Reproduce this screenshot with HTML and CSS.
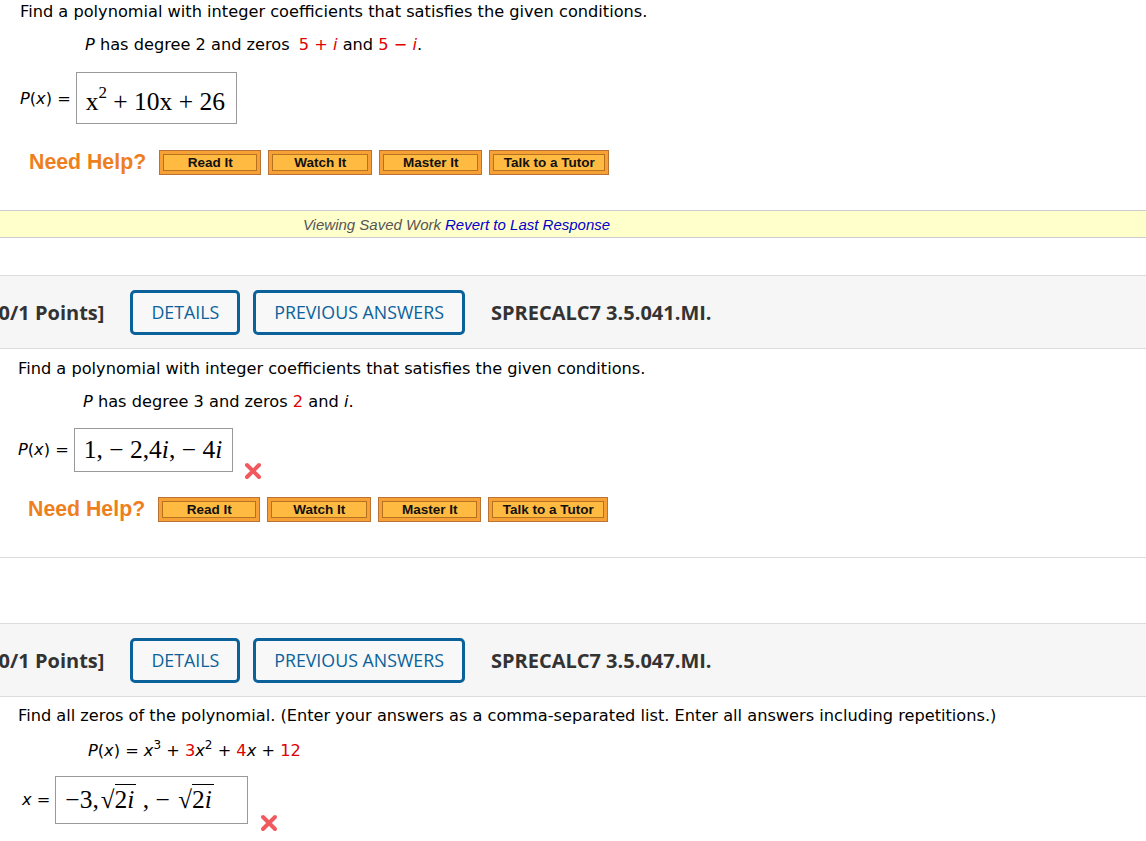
FILE: index.html
```html
<!DOCTYPE html>
<html>
<head>
<meta charset="utf-8">
<link rel="stylesheet" href="styles.css">
</head>
<body>
<div class="q q1">
  <p class="stem">Find a polynomial with integer coefficients that satisfies the given conditions.</p>
  <p class="cond"><i>P</i> has degree 2 and zeros <span class="red sp">5 + <i>i</i></span> and <span class="red">5 &minus; <i>i</i></span>.</p>
  <div class="ans">
    <span class="lbl"><i>P</i>(<i>x</i>) =</span>
    <div class="box box1"><span class="m">x<sup>2</sup> + 10x + 26</span></div>
  </div>
  <div class="help">
    <span class="nh">Need Help?</span>
    <span class="ob w1"><span>Read It</span></span>
    <span class="ob w2"><span>Watch It</span></span>
    <span class="ob w3"><span>Master It</span></span>
    <span class="ob w4"><span>Talk to a Tutor</span></span>
  </div>
</div>
<div class="saved"><i>Viewing Saved Work</i> <a class="rev">Revert to Last Response</a></div>

<div class="head">
  <span class="pts">[0/1 Points]</span>
  <span class="btn">DETAILS</span>
  <span class="btn">PREVIOUS ANSWERS</span>
  <span class="code">SPRECALC7 3.5.041.MI.</span>
</div>
<div class="q q2">
  <p class="stem">Find a polynomial with integer coefficients that satisfies the given conditions.</p>
  <p class="cond"><i>P</i> has degree 3 and zeros <span class="red">2</span> and <i>i</i>.</p>
  <div class="ans">
    <span class="lbl"><i>P</i>(<i>x</i>) =</span>
    <div class="box box2"><span class="m">1, &minus; 2,4<i>i</i>, &minus; 4<i>i</i></span></div>
    <svg class="xm" width="18" height="18" viewBox="0 0 18 18"><path d="M3 3 L15 15 M15 3 L3 15" stroke="#f05a5f" stroke-width="4" stroke-linecap="round"/></svg>
  </div>
  <div class="help">
    <span class="nh">Need Help?</span>
    <span class="ob w1"><span>Read It</span></span>
    <span class="ob w2"><span>Watch It</span></span>
    <span class="ob w3"><span>Master It</span></span>
    <span class="ob w4"><span>Talk to a Tutor</span></span>
  </div>
</div>
<div class="sep"></div>

<div class="head head2">
  <span class="pts">[0/1 Points]</span>
  <span class="btn">DETAILS</span>
  <span class="btn">PREVIOUS ANSWERS</span>
  <span class="code">SPRECALC7 3.5.047.MI.</span>
</div>
<div class="q q3">
  <p class="stem">Find all zeros of the polynomial. (Enter your answers as a comma-separated list. Enter all answers including repetitions.)</p>
  <p class="cond c3"><i>P</i>(<i>x</i>) = <i>x</i><sup>3</sup> + <span class="red">3</span><i>x</i><sup>2</sup> + <span class="red">4</span><i>x</i> + <span class="red">12</span></p>
  <div class="ans">
    <span class="lbl lx"><i>x</i> =</span>
    <div class="box box3"><span class="m">&minus;3,<span class="rt">&radic;</span><span class="ov">2<i>i</i></span> , &minus; <span class="rt">&radic;</span><span class="ov">2<i>i</i></span></span></div>
    <svg class="xm xm3" width="18" height="18" viewBox="0 0 18 18"><path d="M3 3 L15 15 M15 3 L3 15" stroke="#f05a5f" stroke-width="4" stroke-linecap="round"/></svg>
  </div>
</div>
</body>
</html>
```

FILE: styles.css
```css
body {
  margin: 0;
  width: 1146px;
  background: #fff;
  font-family: "DejaVu Sans", Verdana, sans-serif;
  color: #000;
  overflow: hidden;
}
p { margin: 0; }
.q { padding-left: 20px; }
.stem { font-size: 16.2px; line-height: 19px; }
.q1 .stem { padding-top: 2px; }
.cond { font-size: 16.2px; line-height: 19px; padding-left: 65px; margin-top: 14px; }
.red { color: #e00000; }
.sp { margin-left: 4px; }
.ans { display: flex; align-items: center; margin-top: 18px; }
.lbl { font-size: 16.2px; margin-right: 5px; }
.box {
  border: 1px solid #999;
  font-family: "Liberation Serif", "Times New Roman", serif;
  font-size: 25.5px;
  display: flex;
  align-items: center;
  padding: 0 9px;
  box-sizing: border-box;
  white-space: nowrap;
}
.box sup { font-size: 17px; vertical-align: 12px; line-height: 0; }
.box1 { width: 161px; height: 52px; padding-top: 8px; }
.help { display: flex; align-items: center; margin-top: 26px; }
.nh {
  font-family: "Liberation Sans", Arial, sans-serif;
  font-weight: bold;
  font-size: 21.3px;
  color: #ee7f1e;
  margin-left: 9px;
  margin-right: 13px;
}
.ob {
  display: inline-flex;
  height: 25px;
  box-sizing: border-box;
  border: 1px solid #b97434;
  background: #f7a035;
  padding: 3px;
  margin-right: 7px;
}
.ob span {
  flex: 1;
  display: flex;
  align-items: center;
  justify-content: center;
  border: 1px solid #b5731f;
  background: #ffba42;
  font-family: "Liberation Sans", Arial, sans-serif;
  font-weight: bold;
  font-size: 13.5px;
  color: #111;
}
.w1 { width: 102px; }
.w2 { width: 104px; }
.w3 { width: 103px; }
.w4 { width: 120px; }
.saved {
  margin-top: 35px;
  height: 26px;
  border-top: 1px solid #ccc;
  border-bottom: 1px solid #ccc;
  background: #ffffcc;
  font-family: "Liberation Sans", Arial, sans-serif;
  font-size: 15px;
  color: #555;
  display: flex;
  align-items: center;
  justify-content: center;
  padding-right: 233px;
  box-sizing: content-box;
}
.rev { color: #0000cc; font-style: italic; margin-left: 4px; }
.head {
  margin-top: 37px;
  height: 72px;
  background: #f6f6f6;
  border-top: 1px solid #ddd;
  border-bottom: 1px solid #ddd;
  display: flex;
  align-items: center;
  font-family: "Open Sans", sans-serif;
}
.pts { font-weight: bold; font-size: 20px; color: #333; margin-left: -8px; margin-right: 26px; }
.btn {
  height: 45px;
  box-sizing: border-box;
  border: 3px solid #0b629a;
  border-radius: 5px;
  display: flex;
  align-items: center;
  padding: 0 18px;
  font-size: 17.8px;
  color: #0b629a;
  background: #f8f8f8;
  margin-right: 13px;
}
.code { font-weight: bold; font-size: 20px; color: #333; margin-left: 13px; }
.q2 { padding-left: 18px; }
.q2 .stem { margin-top: 10px; }
.q2 .ans { margin-top: 17px; align-items: flex-start; }
.q2 .lbl { margin-top: 12px; }
.box2 { width: 159px; height: 44px; }
.box .m i { font-style: italic; }
.xm { margin-top: 34px; margin-left: 11px; }
.q2 .help { margin-top: 17px; }
.q2 .nh { margin-left: 10px; }
.sep { margin-top: 35px; border-top: 1px solid #ddd; }
.head2 { margin-top: 65px; }
.q3 { padding-left: 18px; }
.q3 .stem { margin-top: 9px; }
.c3 { padding-left: 70px; margin-top: 16px; }
.c3 sup { font-size: 12px; vertical-align: 7px; line-height: 0; }
.q3 .ans { margin-top: 16px; align-items: flex-start; }
.lx { margin-left: 4px; margin-top: 14px; }
.box3 { width: 193px; height: 48px; }
.rt { font-size: 25px; margin-left: 2px; }
.ov { border-top: 1px solid #000; line-height: 24px; padding-right: 2px; }
.xm3 { margin-top: 38px; margin-left: 12px; }
```
